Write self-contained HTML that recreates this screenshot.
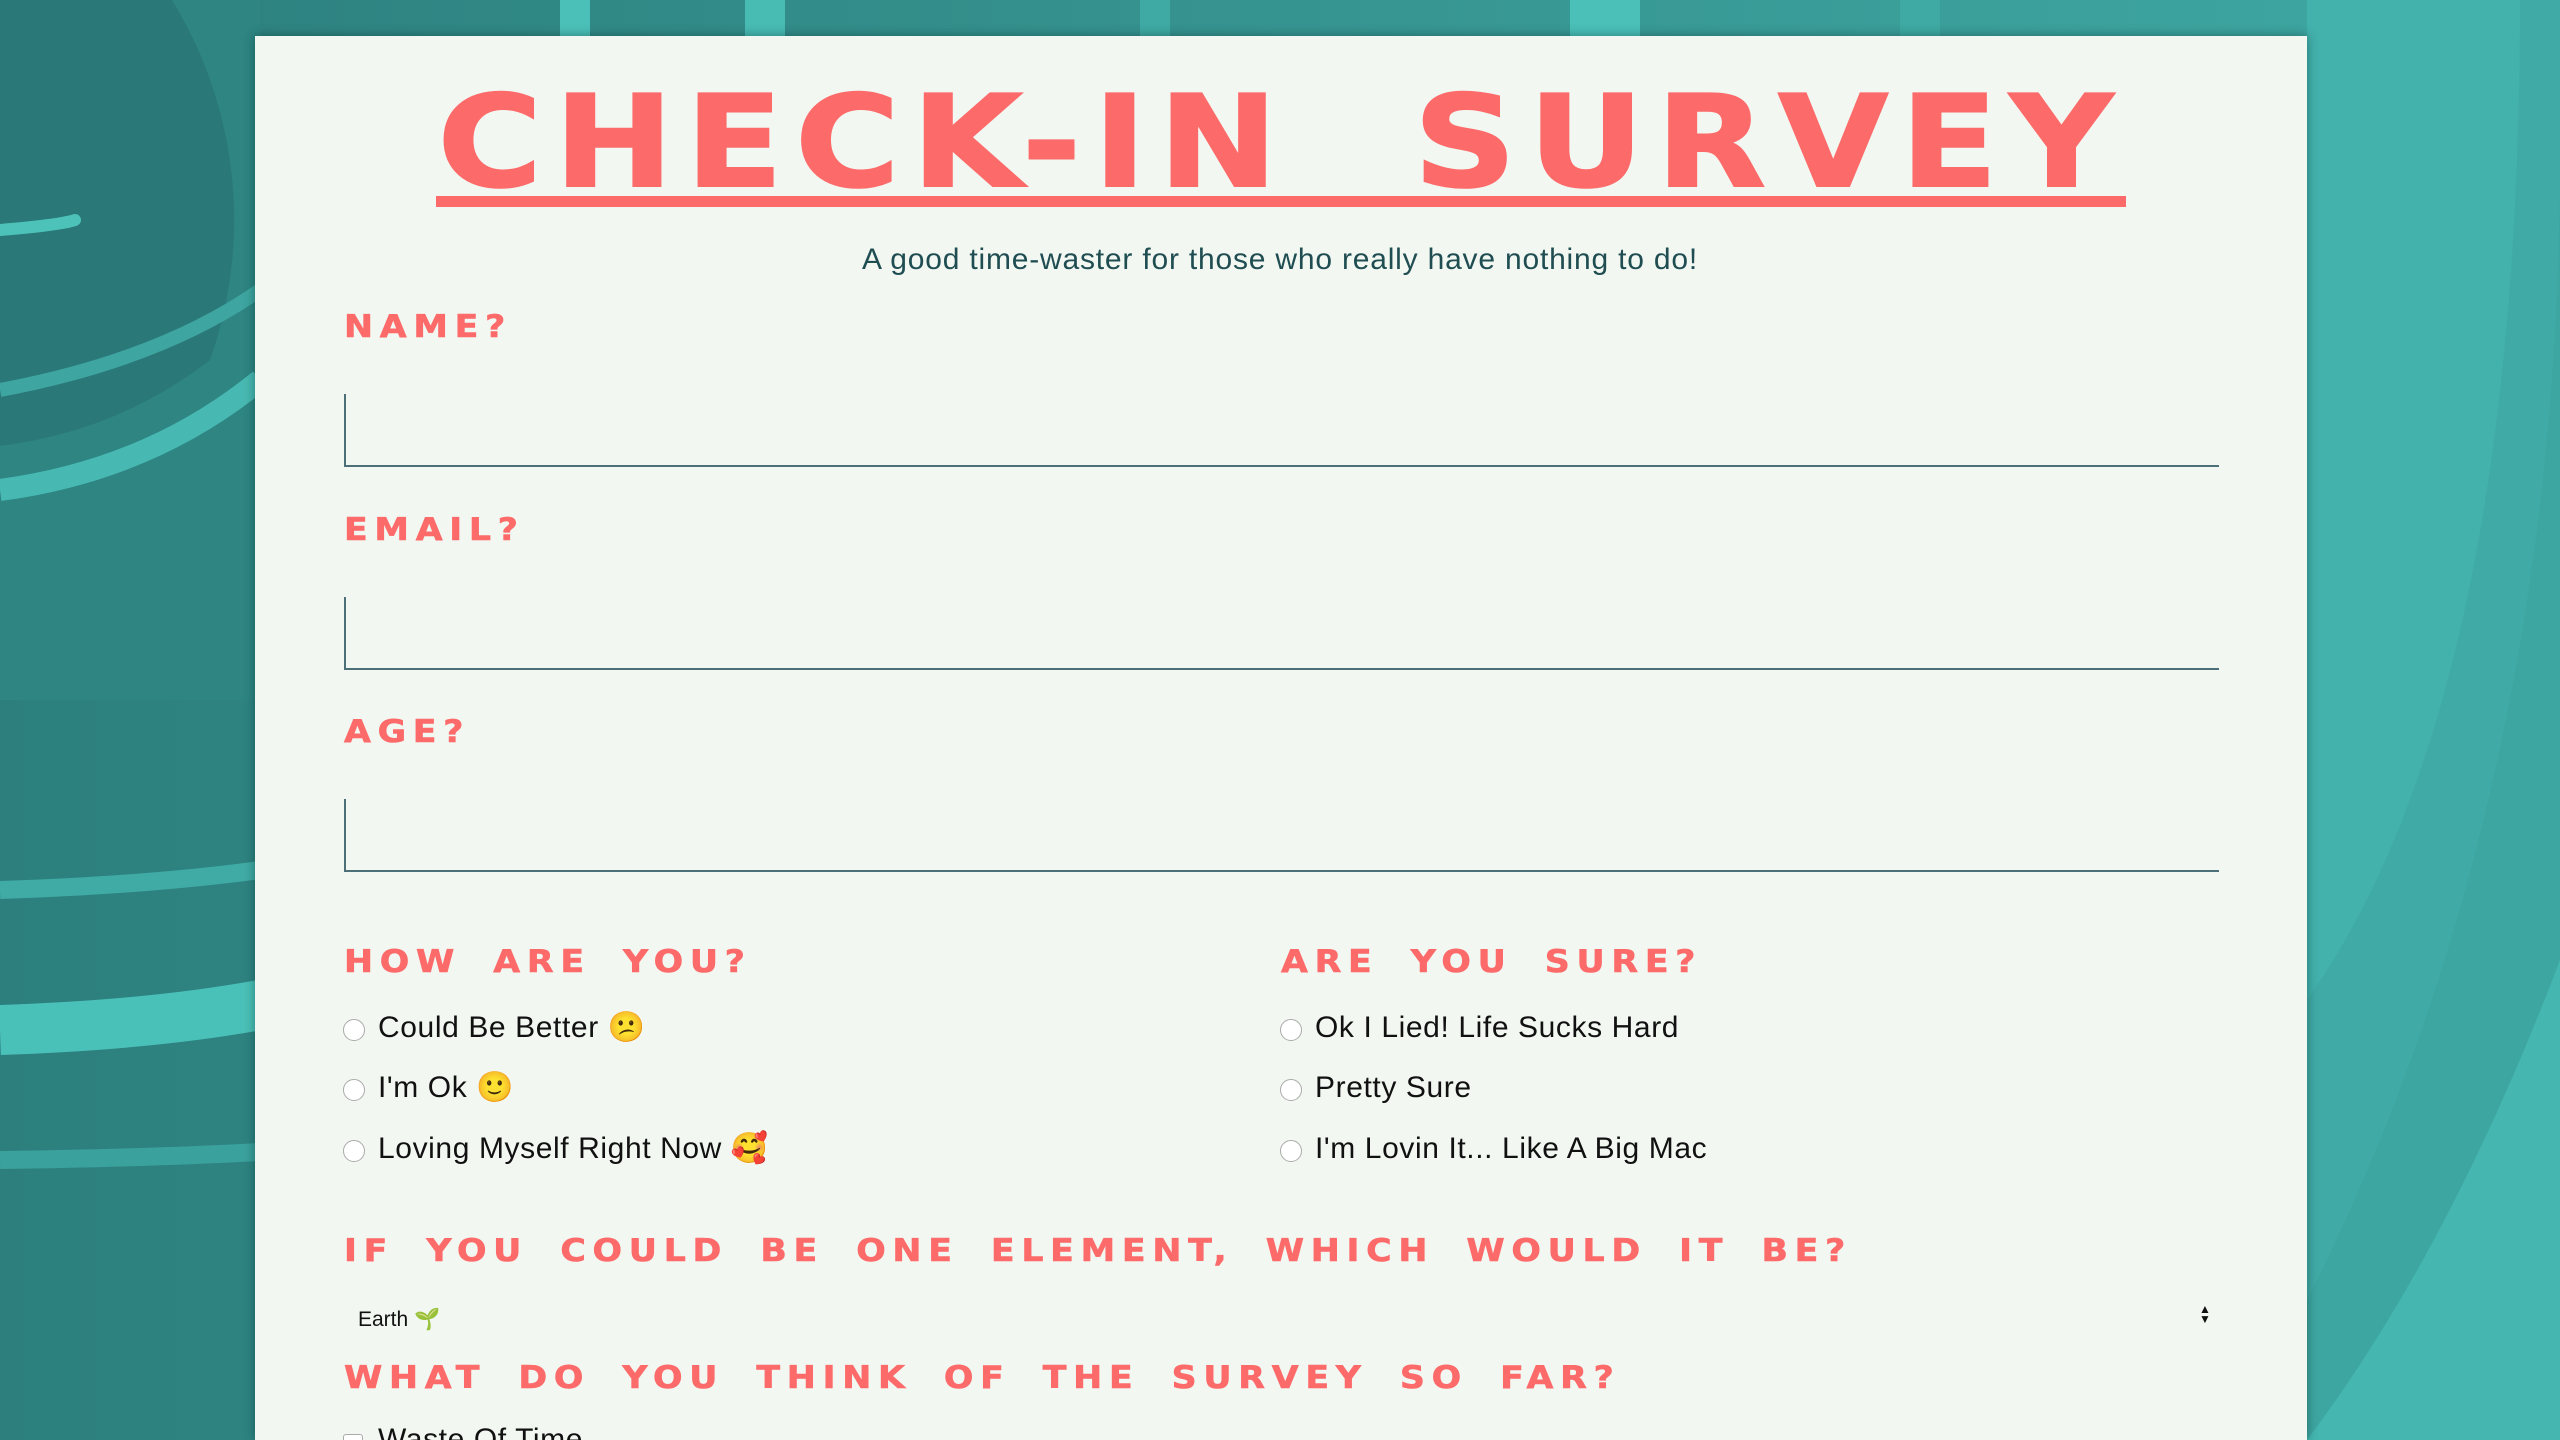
<!DOCTYPE html>
<html><head><meta charset="utf-8"><style>
html,body{margin:0;padding:0;width:2560px;height:1440px;overflow:hidden;background:#33908d;font-family:"Liberation Sans",sans-serif}
#wrap{position:relative;width:2560px;height:1440px;overflow:hidden}
.bg{position:absolute;left:0;top:0}
.card{position:absolute;left:255px;top:36px;width:2052px;height:1404px;background:#f2f7f1;box-shadow:0 0 10px rgba(0,40,40,.45)}
.title{position:absolute;left:436px;top:77px;width:1690px;height:131px;text-align:center;line-height:131px;white-space:pre}
.title span{display:inline-block;font-family:"DejaVu Sans",sans-serif;font-weight:bold;font-size:127px;letter-spacing:11px;color:#fd6a6a;-webkit-text-stroke:2px #fd6a6a;transform:scaleX(1.12);transform-origin:center;white-space:pre}
.uline{position:absolute;left:436px;top:196px;width:1690px;height:11px;background:#fd6a6a}
.sub{position:absolute;left:0;width:2560px;top:243px;text-align:center;font-size:30px;letter-spacing:0.8px;color:#1f4d52}
.lbl{position:absolute;font-family:"DejaVu Sans",sans-serif;font-weight:bold;font-size:31px;letter-spacing:6px;word-spacing:12px;color:#fd6a6a;-webkit-text-stroke:0.6px #fd6a6a;line-height:40px;white-space:pre;transform:scaleX(1.12);transform-origin:left}
.inp{position:absolute;left:344px;width:1873px;height:71px;border-left:2px solid #4d6f78;border-bottom:2px solid #4d6f78}
.opt{position:absolute;font-size:30px;letter-spacing:0.6px;color:#111;line-height:36px;white-space:pre}
.rad{position:absolute;width:20px;height:20px;border:1.5px solid #aaa;border-radius:50%;background:#fff}
</style></head><body><div id="wrap">
<svg class="bg" width="2560" height="1440" viewBox="0 0 2560 1440">
<defs><linearGradient id="g" x1="0" y1="0" x2="1" y2="0"><stop offset="0" stop-color="#2c7f7d"/><stop offset=".5" stop-color="#369490"/><stop offset="1" stop-color="#3fa8a3"/></linearGradient></defs>
<rect width="2560" height="1440" fill="url(#g)"/>
<rect x="0" y="0" width="260" height="700" fill="#2e8582"/>
<path d="M-200 -200 A420 420 0 0 1 210 360 A420 420 0 0 1 -200 420Z" fill="#286f70" opacity=".6"/>
<path d="M0 230 Q60 225 75 220" stroke="#4cc2b9" stroke-width="12" fill="none" stroke-linecap="round"/>
<path d="M0 390 Q160 360 260 290" stroke="#3ea5a0" stroke-width="14" fill="none"/>
<path d="M0 490 Q150 470 260 380" stroke="#48b9b2" stroke-width="22" fill="none"/>
<path d="M0 890 Q150 885 260 870" stroke="#40aba5" stroke-width="18" fill="none"/>
<path d="M0 1030 Q150 1025 260 1005" stroke="#4ac1b8" stroke-width="50" fill="none"/>
<path d="M0 1160 Q150 1158 260 1152" stroke="#3ba19c" stroke-width="18" fill="none"/>
<rect x="560" y="0" width="30" height="40" fill="#4bc0b8"/>
<rect x="745" y="0" width="40" height="40" fill="#48bbb3"/>
<rect x="1140" y="0" width="30" height="40" fill="#3fa9a3"/>
<rect x="1570" y="0" width="70" height="40" fill="#4ac0b8"/>
<rect x="1900" y="0" width="40" height="40" fill="#3fa9a3"/>
<path d="M2307 0 L2560 0 L2560 1440 L2307 1440Z" fill="#43b1ac"/>
<path d="M2520 0 Q2520 700 2307 1000 L2307 1440 L2560 1440 L2560 0Z" fill="#3fa7a2" opacity=".6"/>
<path d="M2560 150 Q2560 800 2307 1300 L2307 1440 L2560 1440Z" fill="#3ea6a1"/>
<path d="M2560 960 Q2450 1250 2307 1440 L2560 1440Z" fill="#45b6b0"/>
</svg>
<div class="card"></div>
<div class="title"><span>CHECK-IN  SURVEY</span></div>
<div class="uline"></div>
<div class="sub">A good time-waster for those who really have nothing to do!</div>
<div class="lbl" style="left:344px;top:307px">NAME?</div>
<div class="inp" style="top:394px"></div>
<div class="lbl" style="left:344px;top:510px">EMAIL?</div>
<div class="inp" style="top:597px"></div>
<div class="lbl" style="left:344px;top:712px">AGE?</div>
<div class="inp" style="top:799px"></div>
<div class="lbl" style="left:344px;top:942px">HOW ARE YOU?</div>
<div class="lbl" style="left:1281px;top:942px">ARE YOU SURE?</div>
<div class="rad" style="left:343px;top:1019px"></div><div class="opt" style="left:378px;top:1010px">Could Be Better 😕</div>
<div class="rad" style="left:343px;top:1079px"></div><div class="opt" style="left:378px;top:1070px">I'm Ok 🙂</div>
<div class="rad" style="left:343px;top:1140px"></div><div class="opt" style="left:378px;top:1131px">Loving Myself Right Now 🥰</div>
<div class="rad" style="left:1280px;top:1019px"></div><div class="opt" style="left:1315px;top:1010px">Ok I Lied! Life Sucks Hard</div>
<div class="rad" style="left:1280px;top:1079px"></div><div class="opt" style="left:1315px;top:1070px">Pretty Sure</div>
<div class="rad" style="left:1280px;top:1140px"></div><div class="opt" style="left:1315px;top:1131px">I'm Lovin It... Like A Big Mac</div>
<div class="lbl" style="left:344px;top:1231px">IF YOU COULD BE ONE ELEMENT, WHICH WOULD IT BE?</div>
<div class="opt" style="left:358px;top:1302px;font-size:21px;letter-spacing:0;color:#111">Earth 🌱</div>
<div style="position:absolute;left:2199px;top:1304px;font-size:12px;line-height:10px;color:#111">▲<br>▼</div>
<div class="lbl" style="left:344px;top:1358px">WHAT DO YOU THINK OF THE SURVEY SO FAR?</div>
<div style="position:absolute;left:343px;top:1434px;width:18px;height:18px;border:1.5px solid #aaa;border-radius:3px;background:#fff"></div>
<div class="opt" style="left:378px;top:1422px">Waste Of Time</div>
</div></body></html>
